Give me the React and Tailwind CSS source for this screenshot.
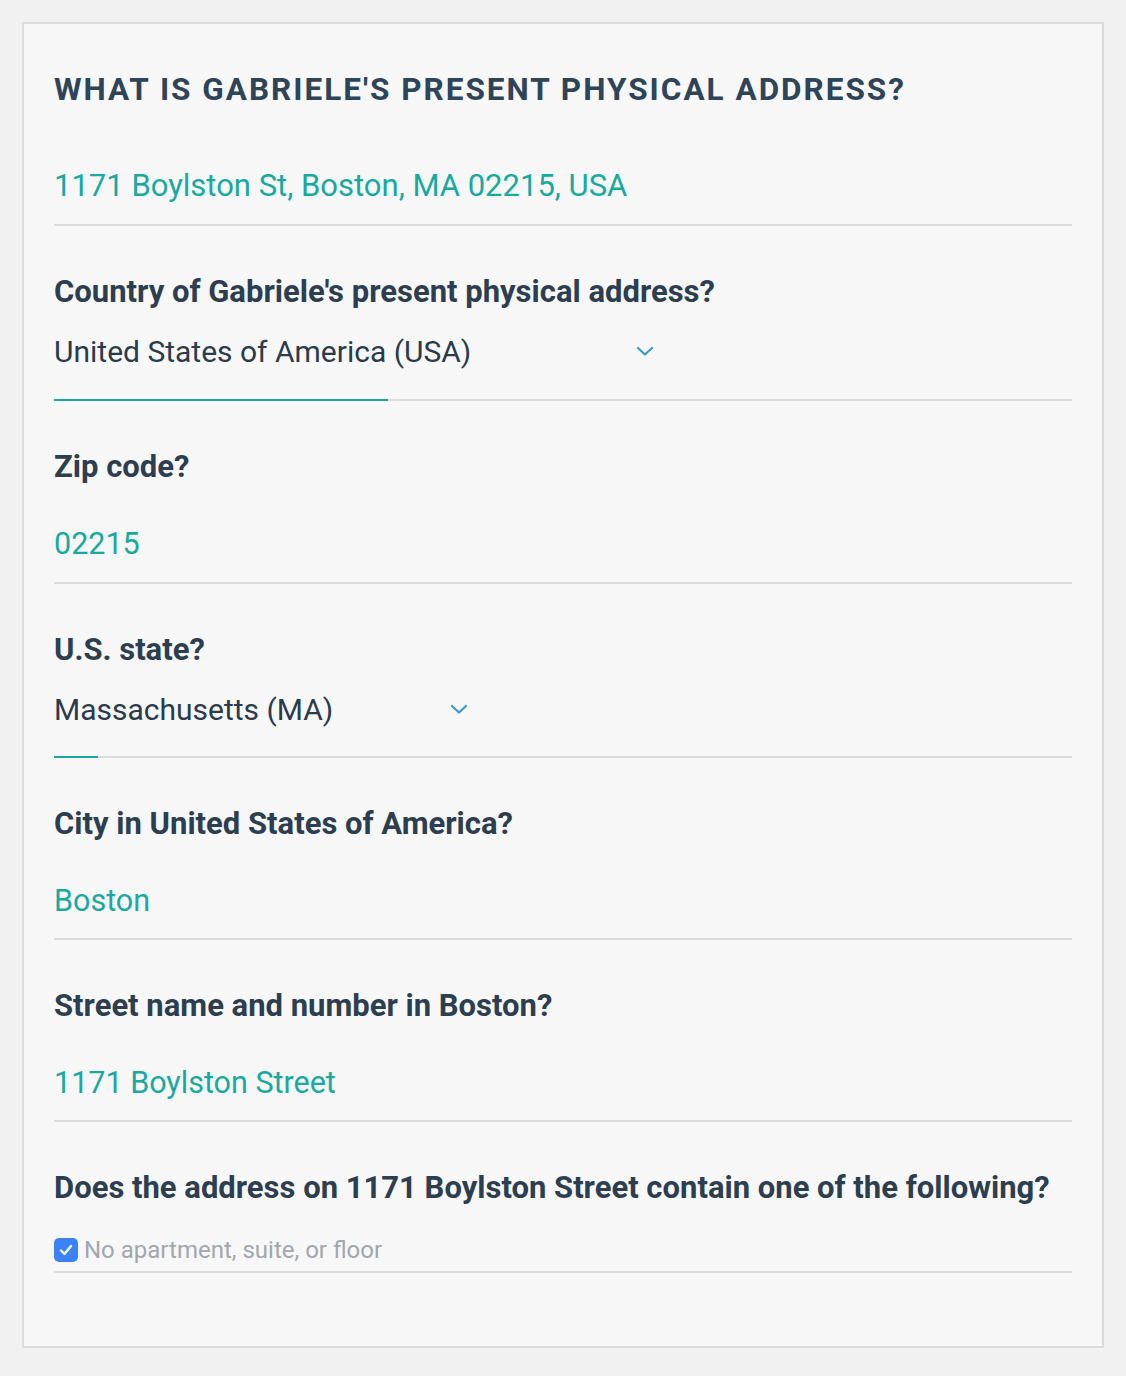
import React from 'react';

const font = { fontFamily: 'Roboto, "Noto Sans", sans-serif' };

const Label = ({ children }) => (
  <div className="text-[31px] leading-[40px] font-bold text-[#2c3e50] whitespace-nowrap">{children}</div>
);

const Chevron = () => (
  <svg width="18" height="10" viewBox="0 0 18 10" fill="none">
    <path d="M2 2l7 6.5L16 2" stroke="#3a98cf" strokeWidth="2.2" strokeLinecap="round" strokeLinejoin="round" />
  </svg>
);

const TextField = ({ label, value, tight }) => (
  <div className={(tight ? 'pb-[17px]' : 'pb-[18px]') + ' pt-[46px] border-b-2 border-[#dcdcdc]'}>
    <Label>{label}</Label>
    <div className="mt-[37px] text-[30.5px] leading-[40px] text-[#18a9a1]">{value}</div>
  </div>
);

const SelectField = ({ label, value, chevronX, filled, tight }) => (
  <div className="pt-[46px]">
    <Label>{label}</Label>
    <div className="mt-[20px] h-[40px] relative text-[30px] leading-[40px] text-[#2a3b4c]">
      {value}
      <span className="absolute top-[14px]" style={{ left: chevronX }}>
        <Chevron />
      </span>
    </div>
    <div className={(tight ? 'mt-[26px]' : 'mt-[27px]') + ' h-[2px] bg-[#dcdcdc] flex'}>
      <div className="h-full bg-[#1aa9a1]" style={{ width: filled }} />
    </div>
  </div>
);

export default function App() {
  return (
    <div className="min-h-screen bg-[#f1f1f1] p-[22px]" style={font}>
      <div className="w-[1082px] border-2 border-[#dcdcdc] bg-[#f7f7f7] px-[30px] pt-[46px] pb-[73px]">
        <div className="text-[31.5px] leading-[40px] font-bold tracking-[2px] text-[#2e4458]">
          WHAT IS GABRIELE'S PRESENT PHYSICAL ADDRESS?
        </div>
        <div className="pt-[56px] pb-[18px] border-b-2 border-[#dcdcdc] text-[31px] leading-[40px] text-[#18a9a1]">
          1171 Boylston St, Boston, MA 02215, USA
        </div>
        <SelectField
          label="Country of Gabriele's present physical address?"
          value="United States of America (USA)"
          chevronX="582px"
          filled="334px"
        />
        <TextField label="Zip code?" value="02215" />
        <SelectField label="U.S. state?" value="Massachusetts (MA)" chevronX="396px" filled="44px" tight />
        <TextField label="City in United States of America?" value="Boston" tight />
        <TextField label="Street name and number in Boston?" value="1171 Boylston Street" tight />
        <div className="pt-[46px] pb-[6px] border-b-2 border-[#dcdcdc]">
          <Label>Does the address on 1171 Boylston Street contain one of the following?</Label>
          <div className="mt-[27px] h-[30px] flex items-center gap-[6px]">
            <span className="w-[24px] h-[24px] rounded-[5px] bg-[#3b82f6] flex items-center justify-center">
              <svg width="14" height="12" viewBox="0 0 14 12" fill="none">
                <path d="M2 6.5l3.5 3.5L12 2" stroke="#fff" strokeWidth="2.4" strokeLinecap="round" strokeLinejoin="round" />
              </svg>
            </span>
            <span className="text-[24px] leading-[30px] text-[#a0a7af]">No apartment, suite, or floor</span>
          </div>
        </div>
      </div>
    </div>
  );
}
